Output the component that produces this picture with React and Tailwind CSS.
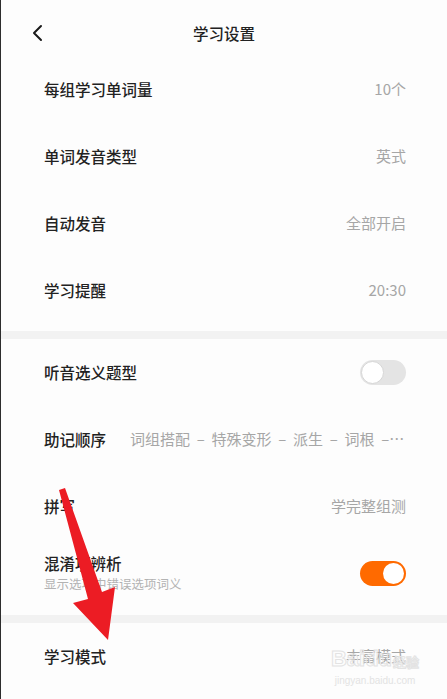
import React from "react";

const font = { fontFamily: '"Noto Sans CJK SC", "Noto Sans", sans-serif' };

const Row = ({ label, value, children }) => (
  <div className="h-[67px] flex items-center justify-between pl-[43px] pr-[41px]">
    <span className="text-[15.5px] font-medium text-[#222] shrink-0">{label}</span>
    {value && (
      <span className="flex-1 min-w-0 text-right text-[15px] text-[#a6a6a6] ml-6 truncate whitespace-pre">{value}</span>
    )}
    {children}
  </div>
);

const Toggle = ({ on }) =>
  on ? (
    <div className="w-[46px] h-[25px] rounded-full bg-[#ff6a00] flex items-center justify-end pr-[2px]">
      <div className="w-[21px] h-[21px] rounded-full bg-white"></div>
    </div>
  ) : (
    <div className="w-[46px] h-[25px] rounded-full bg-[#e4e4e4] flex items-center pl-[1px]">
      <div className="w-[23px] h-[23px] rounded-full bg-white border border-[#d6d6d6]"></div>
    </div>
  );

const App = () => {
  return (
    <div className="relative w-[447px] h-[699px] overflow-hidden bg-[#fdfdfd] border-l border-[#2d2d2d]" style={font}>
      {/* header */}
      <div className="h-[56px] relative flex justify-center pt-[23px]">
        <svg className="absolute left-[29px] top-[24px]" width="14" height="18" viewBox="0 0 14 18" fill="none">
          <path d="M11 2 L4 9 L11 16" stroke="#1a1a1a" strokeWidth="2" strokeLinecap="round" strokeLinejoin="round" />
        </svg>
        <span className="text-[15.5px] leading-[20px] text-[#222] font-medium">学习设置</span>
      </div>

      <div className="pb-[7px]">
        <Row label="每组学习单词量" value="10个" />
        <Row label="单词发音类型" value="英式" />
        <Row label="自动发音" value="全部开启" />
        <Row label="学习提醒" value="20:30" />
      </div>
      <div className="h-[8px] bg-[#f2f2f2]"></div>

      <div className="pb-[8px]">
        <Row label="听音选义题型">
          <Toggle on={false} />
        </Row>
        <Row label="助记顺序" value="词组搭配  –  特殊变形  –  派生  –  词根  –  词源  –  联想" />
        <Row label="拼写" value="学完整组测" />
        <div className="h-[67px] flex items-center justify-between pl-[43px] pr-[41px]">
          <div className="flex flex-col pb-[2px]">
            <span className="text-[15.5px] leading-[20px] font-medium text-[#222]">混淆项辨析</span>
            <span className="text-[12.5px] leading-[18px] text-[#b3b3b3] mt-[2px]">显示选项中错误选项词义</span>
          </div>
          <Toggle on={true} />
        </div>
      </div>
      <div className="h-[8px] bg-[#f2f2f2]"></div>

      <Row label="学习模式" value="丰富模式" />

      {/* watermark */}
      <div className="absolute left-[328px] top-[647px] w-[92px] flex flex-col items-center pointer-events-none">
        <div className="flex items-end text-[22px] leading-[24px] font-bold text-transparent" style={{ WebkitTextStroke: "1px #e3e3e3", fontFamily: '"Liberation Sans", sans-serif' }}>
          <span>Bai</span>
          <span>du</span>
          <span className="text-[13px] leading-[18px] ml-[1px]" style={{ fontFamily: '"Noto Sans CJK SC", sans-serif' }}>经验</span>
        </div>
        <span className="text-[10px] leading-[13px] text-[#e3e3e3] mt-[3px]" style={{ fontFamily: '"Liberation Sans", sans-serif' }}>jingyan.baidu.com</span>
      </div>

      {/* red arrow annotation */}
      <svg className="absolute left-0 top-0 pointer-events-none" width="447" height="699" viewBox="0 0 447 699">
        <polygon points="58,490 64,488 101,592 114,587 107,640 72,603 87,599" fill="#ec1c24" />
      </svg>
    </div>
  );
};

export default App;
